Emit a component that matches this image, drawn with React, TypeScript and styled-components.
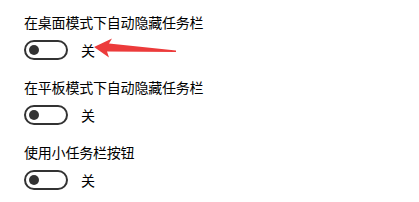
import styled, { createGlobalStyle } from 'styled-components';

const GlobalStyle = createGlobalStyle`
  html, body {
    margin: 0;
    padding: 0;
    background: #ffffff;
  }
  body {
    font-family: "Noto Sans CJK SC", "Noto Sans", sans-serif;
    color: #000000;
  }
`;

const Page = styled.div`
  width: 419px;
  height: 202px;
  box-sizing: border-box;
  padding: 12px 0 0 24px;
  overflow: hidden;
  position: relative;
`;

const Setting = styled.div`
  display: flex;
  flex-direction: column;
  gap: 8px;
  margin-bottom: 17px;
`;

const Label = styled.div`
  font-size: 14px;
  line-height: 20px;
  letter-spacing: -0.2px;
  white-space: nowrap;
`;

const Row = styled.div`
  display: flex;
  align-items: center;
  gap: 13px;
  height: 20px;
  position: relative;
`;

const Track = styled.div<{ $on?: boolean }>`
  width: 44px;
  height: 20px;
  box-sizing: border-box;
  border: 2px solid #333333;
  border-radius: 10px;
  display: flex;
  align-items: center;
  padding: 0 3px;
  justify-content: ${(p) => (p.$on ? 'flex-end' : 'flex-start')};
`;

const Knob = styled.div`
  width: 10px;
  height: 10px;
  border-radius: 50%;
  background: #333333;
`;

const State = styled.span`
  font-size: 14px;
  line-height: 20px;
`;

const Arrow = styled.svg`
  position: absolute;
  left: 68px;
  top: -6px;
  overflow: visible;
`;

const Toggle = ({ on = false }: { on?: boolean }) => (
  <Track $on={on}>
    <Knob />
  </Track>
);

// red annotation arrow pointing at the first switch's state
const PointerArrow = () => (
  <Arrow width="86" height="26" viewBox="0 0 86 26">
    <path
      d="M2 13 L20 4.5 L17 9.5 L84 16.5 L84 18 L15 17.5 L17 23.5 Z"
      fill="#ec3b3b"
    />
  </Arrow>
);

const settings = [
  { label: '在桌面模式下自动隐藏任务栏', arrow: true },
  { label: '在平板模式下自动隐藏任务栏', arrow: false },
  { label: '使用小任务栏按钮', arrow: false },
];

export default function App() {
  return (
    <>
      <GlobalStyle />
      <Page>
        {settings.map((s) => (
          <Setting key={s.label}>
            <Label>{s.label}</Label>
            <Row>
              <Toggle />
              <State>关</State>
              {s.arrow && <PointerArrow />}
            </Row>
          </Setting>
        ))}
      </Page>
    </>
  );
}
